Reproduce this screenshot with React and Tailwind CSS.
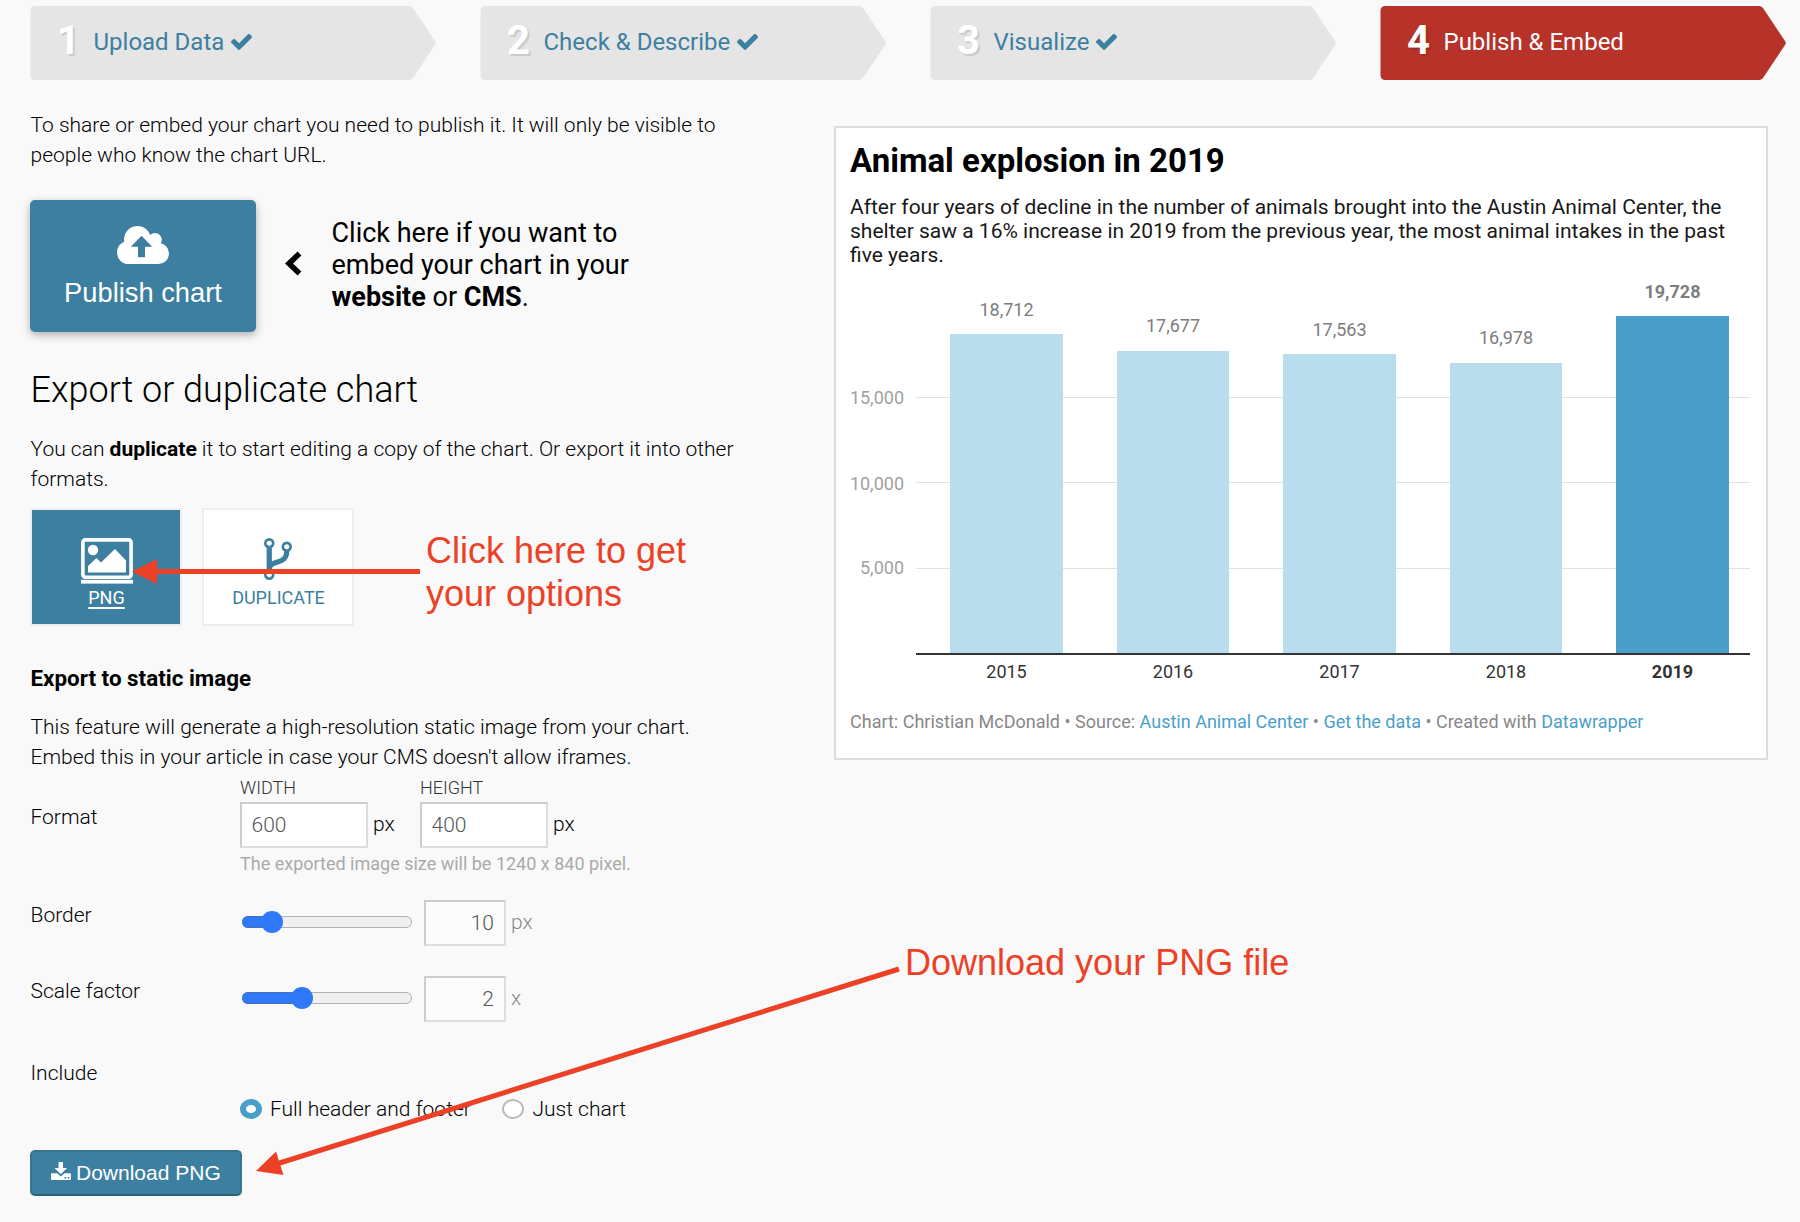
const sans = "font-['Roboto',sans-serif]";
const arial = "font-['Liberation_Sans',sans-serif]";

function CheckIcon({ className }) {
  return (
    <svg className={className} viewBox="121 343 1550 1179" fill="currentColor">
      <path d="M1671 566q0 40-28 68l-724 724-136 136q-28 28-68 28t-68-28l-136-136-362-362q-28-28-28-68t28-68l136-136q28-28 68-28t68 28l294 295 656-657q28-28 68-28t68 28l136 136q28 28 28 68z" />
    </svg>
  );
}

function CloudIcon({ className }) {
  return (
    <svg className={className} viewBox="0 0 52 38" fill="currentColor">
      <circle cx="20.500" cy="13.500" r="13.500" />
      <circle cx="38" cy="13.800" r="6.800" />
      <circle cx="11.500" cy="26.500" r="11.500" />
      <circle cx="41.500" cy="27.500" r="10.500" />
      <path d="M11 14H40L46 20V30L41.500 38H11.500L8 30z" />
      <path d="M24.500 9.700L35.200 20.700H28V31.200H21V20.700H13.800z" fill="#3d7fa0" />
    </svg>
  );
}

function ForkIcon({ className }) {
  return (
    <svg className={className} viewBox="384 128 1024 1536" fill="currentColor">
      <path d="M672 1472q0-40-28-68t-68-28-68 28-28 68 28 68 68 28 68-28 28-68zm0-1152q0-40-28-68t-68-28-68 28-28 68 28 68 68 28 68-28 28-68zm640 128q0-40-28-68t-68-28-68 28-28 68 28 68 68 28 68-28 28-68zm96 0q0 52-26 96.500t-70 69.500q-2 287-226 414-67 38-203 81-128 40-169.500 71t-41.500 100v26q44 25 70 69.500t26 96.500q0 80-56 136t-136 56-136-56-56-136q0-52 26-96.500t70-69.500v-820q-44-25-70-69.500t-26-96.500q0-80 56-136t136-56 136 56 56 136q0 52-26 96.500t-70 69.500v497q54-26 154-57 55-17 87.500-29.500t70.500-31 59-39.500 40.500-51 28-69.500 8.500-91.500q-44-25-70-69.500t-26-96.500q0-80 56-136t136-56 136 56 56 136z" />
    </svg>
  );
}

function DownloadIcon({ className }) {
  return (
    <svg className={className} viewBox="0 0 20 18" fill="currentColor">
      <path d="M7.500 0.500Q7.500 0 8 0H11.500Q12 0 12 0.500V6H16L9.800 12.200L3.500 6H7.500z" />
      <path d="M1 11.300H6L9.800 14.600L13.500 11.300H19Q20 11.300 20 12.300V17Q20 18 19 18H1Q0 18 0 17V12.300Q0 11.300 1 11.300z" />
      <rect x="13.500" y="15" width="1.600" height="1.600" fill="#3d7fa0" />
      <rect x="16.600" y="15" width="1.600" height="1.600" fill="#3d7fa0" />
    </svg>
  );
}

function PictureIcon({ className }) {
  return (
    <svg className={className} viewBox="0 0 52 46" fill="currentColor">
      <rect x="1.900" y="1.900" width="48.200" height="37.400" rx="2.500" fill="none" stroke="currentColor" strokeWidth="3.600" />
      <circle cx="12" cy="12" r="5.200" />
      <path d="M7 34.500V28l8.500-8 4.500 4.500L34 11l11 11.500v12z" />
      <rect x="0" y="41.800" width="52" height="3.800" />
    </svg>
  );
}

const steps = [
  { n: 1, label: "Upload Data", done: true },
  { n: 2, label: "Check & Describe", done: true },
  { n: 3, label: "Visualize", done: true },
  { n: 4, label: "Publish & Embed", active: true },
];

function Step({ n, label, done, active }) {
  return (
    <div className={"relative flex h-[74px] w-[406px] shrink-0 " + (active ? "text-white" : "text-[#3d7fa0]")}>
      <svg className="absolute inset-0" width="406" height="74" viewBox="0 0 406 74" fill={active ? "#b73229" : "#e5e5e5"}>
        <path d="M5.500 0H379q2.500 0 4 2L405 35q1.500 2 0 4L383 72q-1.500 2-4 2H5.500q-5 0-5-5V5q0-5 5-5z" />
      </svg>
      <span className="relative w-[63.500px] pl-[27px] text-[40px] leading-[70px] font-bold text-white [text-shadow:2px_2px_1px_rgba(0,0,0,0.12)]">{n}</span>
      <span className="relative text-[24px] leading-[73px] whitespace-nowrap">{label}</span>
      {done && <CheckIcon className="relative mt-[28px] ml-[7px] h-[16px] w-[21px]" />}
    </div>
  );
}

const bars = [
  { year: "2015", value: "18,712", x: 950, w: 113, top: 334, labelY: 316 },
  { year: "2016", value: "17,677", x: 1117, w: 112, top: 351, labelY: 332 },
  { year: "2017", value: "17,563", x: 1283, w: 113, top: 354, labelY: 336 },
  { year: "2018", value: "16,978", x: 1450, w: 112, top: 363, labelY: 344 },
  { year: "2019", value: "19,728", x: 1616, w: 113, top: 316, labelY: 298, hot: true },
];
const ticks = [
  { label: "15,000", y: 397, labelY: 404 },
  { label: "10,000", y: 482, labelY: 490 },
  { label: "5,000", y: 568, labelY: 574 },
];

function BarChart() {
  return (
    <svg className="block font-['Roboto',sans-serif]" width="902" height="420" viewBox="850 270 902 420" fontSize="18">
      {ticks.map((t) => (
        <g key={t.label}>
          <text x="904" y={t.labelY} textAnchor="end" fill="#a1a1a1">{t.label}</text>
          <rect x="916" y={t.y} width="834" height="1" fill="#e2e2e2" />
        </g>
      ))}
      {bars.map((b) => (
        <g key={b.year} textAnchor="middle" fontWeight={b.hot ? 700 : 400}>
          <rect x={b.x} y={b.top} width={b.w} height={653 - b.top} fill={b.hot ? "#4a9fca" : "#b8ddec"} />
          <text x={b.x + b.w / 2} y={b.labelY} fill="#7d7d7d">{b.value}</text>
          <text x={b.x + b.w / 2} y="678" fill="#333">{b.year}</text>
        </g>
      ))}
      <rect x="916" y="653" width="834" height="2" fill="#333" />
    </svg>
  );
}

function ChartCard() {
  return (
    <div className="mt-[46px] h-[634px] w-[934px] border-2 border-[#ddd] bg-white pt-[13px] pl-[14px]">
      <h2 className="text-[33px] leading-[40px] font-bold whitespace-nowrap text-black">Animal explosion in 2019</h2>
      <p className="mt-[14px] text-[21px] leading-[24px] whitespace-nowrap text-[#181818]">
        After four years of decline in the number of animals brought into the Austin Animal Center, the<br />
        shelter saw a 16% increase in 2019 from the previous year, the most animal intakes in the past<br />
        five years.
      </p>
      <div className="mt-[3px]">
        <BarChart />
      </div>
      <p className="mt-[22px] text-[18px] leading-[20px] whitespace-nowrap text-[#888]">
        Chart: Christian McDonald • Source: <a className="text-[#4a9fca]">Austin Animal Center</a> • <a className="text-[#4a9fca]">Get the data</a> • Created with <a className="text-[#4a9fca]">Datawrapper</a>
      </p>
    </div>
  );
}

const boxCls = "h-[46px] border-2 border-t-[#ccc] border-r-[#ddd] border-b-[#ddd] border-l-[#ccc] text-[21px] leading-[42px] font-light text-[#555]";

function SizeField({ label, value }) {
  return (
    <div className="w-[180px]">
      <div className="text-[18px] leading-[20px] font-light text-[#333]">{label}</div>
      <div className="mt-[4px] flex">
        <div className={boxCls + " w-[128px] bg-white pl-[9.500px]"}>{value}</div>
        <span className="ml-[5px] text-[21px] leading-[44px] font-light">px</span>
      </div>
    </div>
  );
}

function SliderRow({ label, fill, value, unit }) {
  return (
    <div className="flex h-[76px]">
      <div className="w-[211.500px] leading-[30px]">{label}</div>
      <div className="mt-[16px] flex h-[12px] w-[170px] items-center rounded-full border border-[#b2b2b2] bg-[#efefef]">
        <div className="-ml-px h-[12px] rounded-l-full border-y border-[#4a6fb5] bg-[#2f78f8]" style={{ width: fill - 4 }} />
        <div className="-ml-[7px] size-[22px] shrink-0 rounded-full bg-[#2f78f8]" />
      </div>
      <div className={boxCls + " ml-[12px] w-[82px] bg-[#fcfcfc] pr-[10px] text-right"}>{value}</div>
      <span className="ml-[5px] leading-[44px] text-[#888]">{unit}</span>
    </div>
  );
}

function Annotations() {
  return (
    <>
      <svg className="pointer-events-none absolute inset-0" width="1800" height="1222" fill="#ec4126">
        <rect x="155" y="569" width="265" height="5" />
        <path d="M132 571.500L157 559V584z" />
        <path d="M899 969L278 1163.500" stroke="#ec4126" strokeWidth="5" />
        <path d="M256 1171L276 1151.500L283.500 1175z" />
      </svg>
      <p className="absolute top-[529px] left-[426px] text-[36px] leading-[43px] whitespace-nowrap text-[#ec4126] font-['Liberation_Sans',sans-serif]">
        Click here to get<br />your options
      </p>
      <p className="absolute top-[941px] left-[905px] text-[36px] leading-[43px] whitespace-nowrap text-[#ec4126] font-['Liberation_Sans',sans-serif]">
        Download your PNG file
      </p>
    </>
  );
}

export default function App() {
  return (
    <div className={sans + " relative h-[1222px] w-[1800px] overflow-hidden bg-[#f9f9f9] text-black"}>
      <div className="flex gap-[44px] pt-[6px] pl-[30px]">
        {steps.map((s) => <Step key={s.n} {...s} />)}
      </div>
      <div className="flex">
        <div className="w-[834px] shrink-0 pt-[30px] pl-[30.500px] text-[21px] leading-[30px] font-light whitespace-nowrap">
          <p>To share or embed your chart you need to publish it. It will only be visible to<br />people who know the chart URL.</p>
          <div className="mt-[30px] -ml-[0.5px] flex h-[132px] items-center">
            <button className={arial + " flex h-[132px] w-[226px] flex-col items-center rounded-[5px] bg-[#3d7fa0] pt-[26px] text-[27.300px] font-normal text-white shadow-[0_3px_8px_rgba(0,0,0,0.3)]"}>
              <CloudIcon className="h-[38px] w-[52px]" />
              <span className="mt-[13px] leading-[32px]">Publish chart</span>
            </button>
            <svg className="-mt-[5px] ml-[29px] h-[25px] w-[17px]" viewBox="0 0 17 25" fill="none" stroke="#000" strokeWidth="5.500">
              <path d="M14.500 2.500L4 12.500L14.500 22.500" />
            </svg>
            <p className="mt-[-3px] ml-[29.500px] text-[27px] leading-[32px] font-normal">Click here if you want to<br />embed your chart in your<br /><b className="font-bold">website</b> or <b className="font-bold">CMS</b>.</p>
          </div>
          <h2 className="mt-[38px] text-[36px] leading-[40px]">Export or duplicate chart</h2>
          <p className="mt-[24px]">You can <b className="font-bold">duplicate</b> it to start editing a copy of the chart. Or export it into other<br />formats.</p>
          <div className="mt-[14px] -ml-[0.5px] flex gap-[20px] text-[18px] leading-[22px] font-normal">
            <div className="flex h-[118px] w-[152px] flex-col items-center border-2 border-[#eee] bg-[#3d7fa0] pt-[28px] text-white">
              <PictureIcon className="ml-px h-[46px] w-[52px]" />
              <span className="mt-[3px] ml-px underline decoration-2 underline-offset-[3px]">PNG</span>
            </div>
            <div className="flex h-[118px] w-[152px] flex-col items-center border-2 border-[#eee] bg-white pt-[28px] text-[#3d7fa0]">
              <ForkIcon className="h-[42px] w-[28px]" />
              <span className="mt-[7px] ml-px">DUPLICATE</span>
            </div>
          </div>
          <h3 className="mt-[37px] text-[22.400px] font-bold">Export to static image</h3>
          <p className="mt-[19px]">This feature will generate a high-resolution static image from your chart.<br />Embed this in your article in case your CMS doesn't allow iframes.</p>
          <div className="mt-[6px] flex h-[122px]">
            <div className="w-[209.500px] pt-[24px]">Format</div>
            <div>
              <div className="flex">
                <SizeField label="WIDTH" value="600" />
                <SizeField label="HEIGHT" value="400" />
              </div>
              <div className="mt-[6px] text-[18px] leading-[20px] font-normal text-[#aaa]">The exported image size will be 1240 x 840 pixel.</div>
            </div>
          </div>
          <SliderRow label="Border" fill={30} value="10" unit="px" />
          <SliderRow label="Scale factor" fill={60} value="2" unit="x" />
          <div className="mt-[6px]">Include</div>
          <div className="mt-[6px] flex items-center pl-[209.500px]">
            <span className="-mt-px h-[20px] w-[22px] rounded-[50%] border-[6px] border-[#4a9fca] bg-white" />
            <span className="ml-[8px] w-[232px]">Full header and footer</span>
            <span className="-mt-px h-[20px] w-[22px] rounded-[50%] border-2 border-[#bbb] bg-white" />
            <span className="ml-[8.500px]">Just chart</span>
          </div>
          <button className={arial + " mt-[26px] -ml-[0.5px] flex h-[46px] w-[212px] rounded-[5px] border-2 border-[#38748f] border-b-[#2d6079] bg-[#3d7fa0] pl-[19px] text-[21px] leading-[42px] font-normal text-white"}>
            <DownloadIcon className="mt-[10px] mr-[5px] h-[18px] w-[20px]" />
            Download PNG
          </button>
        </div>
        <ChartCard />
      </div>
      <Annotations />
    </div>
  );
}
